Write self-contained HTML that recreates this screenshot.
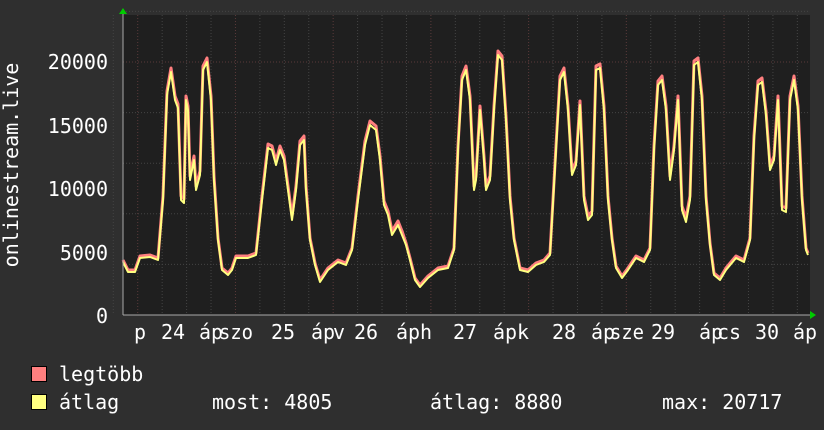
<!DOCTYPE html>
<html><head><meta charset="utf-8"><style>
html,body{margin:0;padding:0;background:#2f2f2f;}
svg{display:block}
text{font-family:"DejaVu Sans Mono","Liberation Mono",monospace;fill:#fff;font-size:20px}
</style></head><body>
<svg width="824" height="430" viewBox="0 0 824 430" xmlns="http://www.w3.org/2000/svg">
<rect width="824" height="430" fill="#2f2f2f"/>
<rect x="123" y="15" width="687" height="300" fill="#1f1f1f"/>
<g id="grid"></g>
<polyline id="mx" fill="none" stroke="#ff7f7f" stroke-width="3" stroke-linejoin="round"/>
<polyline id="av" fill="none" stroke="#ffff80" stroke-width="2" stroke-linejoin="round"/>
<line x1="123" y1="315" x2="814" y2="315" stroke="#aaa"/>
<line x1="123" y1="315" x2="123" y2="10" stroke="#aaa"/>
<polygon points="810,311 816,315 810,319" fill="#00cc00"/>
<polygon points="119,14 123,8 127,14" fill="#00cc00"/>
<text x="18" y="165" transform="rotate(-90 18 165)" text-anchor="middle">onlinestream.live</text>
<g text-anchor="end">
<text x="108" y="69">20000</text><text x="108" y="133">15000</text><text x="108" y="196">10000</text><text x="108" y="260">5000</text><text x="108" y="323">0</text>
</g>
<g>
<text x="134" y="339">p</text><text x="161" y="339">24</text><text x="199" y="339" textLength="24" lengthAdjust="spacingAndGlyphs">áp</text><text x="219" y="339" textLength="34" lengthAdjust="spacingAndGlyphs">szo</text>
<text x="271" y="339">25</text><text x="311" y="339">áp</text><text x="333" y="339">v</text>
<text x="354" y="339">26</text><text x="396" y="339">áp</text><text x="420" y="339">h</text>
<text x="453" y="339">27</text><text x="493" y="339">áp</text><text x="517" y="339">k</text>
<text x="552" y="339">28</text><text x="591" y="339">áp</text><text x="610" y="339" textLength="34" lengthAdjust="spacingAndGlyphs">sze</text>
<text x="651" y="339">29</text><text x="699" y="339">áp</text><text x="717" y="339">cs</text>
<text x="755" y="339">30</text><text x="793" y="339">áp</text>
</g>
<rect x="31.5" y="366.5" width="15" height="15" fill="#ff7f7f" stroke="#000"/>
<rect x="31.5" y="394.5" width="15" height="15" fill="#ffff80" stroke="#000"/>
<text x="59" y="381">legtöbb</text>
<text x="59" y="409">átlag</text>
<text x="212" y="409">most: 4805</text>
<text x="430" y="409">átlag: 8880</text>
<text x="662" y="409">max: 20717</text>
</svg>
<script>
var g=document.getElementById('grid'),h='';
for(var v=1000;v<=23000;v+=1000){var y=315-v*0.0506;var maj=v%5000==0;
h+='<line x1="123" x2="810" y1="'+y+'" y2="'+y+'" stroke="'+(maj?'#5a3a3a':'#444')+'" stroke-dasharray="1,2"/>';}
for(var x=137.7-24.4;x<810;x+=24.43){var d=Math.abs(((x-137.7)/97.7)-Math.round((x-137.7)/97.7))<0.05;
h+='<line y1="15" y2="315" x1="'+x+'" x2="'+x+'" stroke="'+(d?'#5a3a3a':'#444')+'" stroke-dasharray="1,2"/>';}
g.innerHTML=h;
var p=[123,262,128,272,135,272,140,258,150,257,158,260,163,200,167,95,171,72,175,100,178,108,181,200,184,203,186,100,188,110,190,180,194,160,196,190,200,175,203,70,207,62,211,100,214,180,218,240,222,270,228,275,232,270,236,258,248,258,256,255,262,200,268,148,272,150,276,165,280,150,284,160,288,190,292,220,296,190,300,145,304,140,306,190,310,240,315,265,320,282,328,270,338,262,346,265,352,250,358,200,365,145,370,125,376,130,380,160,384,205,388,215,392,235,398,225,402,235,406,245,410,260,415,280,420,287,428,278,438,270,448,268,454,250,458,150,462,80,466,70,470,100,474,190,476,180,480,110,484,160,486,190,490,180,494,110,498,55,502,60,506,120,510,200,514,240,520,270,528,272,536,265,544,262,550,255,556,150,560,80,564,72,568,110,572,175,576,165,580,105,584,200,588,220,592,215,596,70,600,68,604,110,608,200,612,240,616,268,622,278,628,270,636,258,644,262,650,250,654,150,658,85,662,80,666,110,670,180,674,150,678,100,682,210,686,222,690,200,694,65,698,62,702,100,706,200,710,245,714,275,720,280,726,270,736,258,744,262,750,240,754,140,758,85,762,82,766,115,770,170,774,160,778,100,782,210,786,212,790,100,794,80,798,110,802,200,806,250,808,255];
var a='',m='';for(var i=0;i<p.length;i+=2){a+=p[i]+','+p[i+1]+' ';m+=p[i]+','+(p[i+1]-(p[i+1]<240?4:2))+' ';}
document.getElementById('av').setAttribute('points',a);document.getElementById('mx').setAttribute('points',m);
</script>
</body></html>
